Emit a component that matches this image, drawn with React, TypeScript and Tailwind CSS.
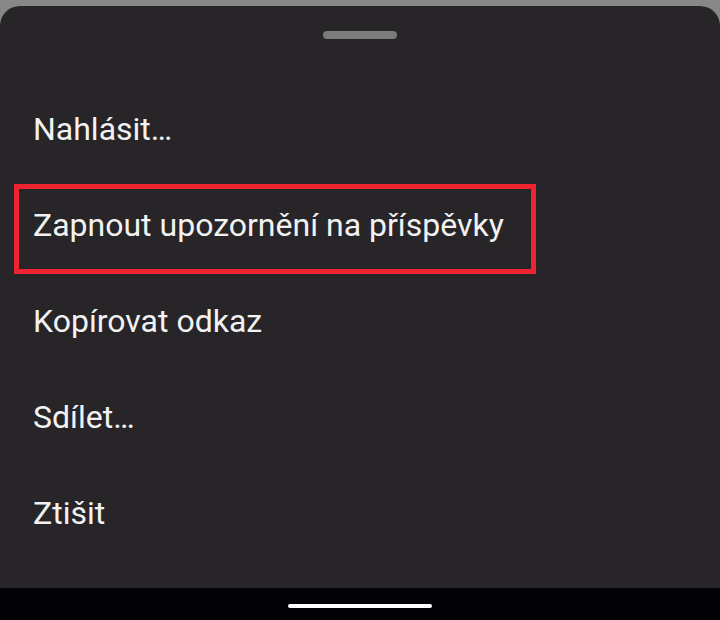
const items = [
  "Nahlásit…",
  "Zapnout upozornění na příspěvky",
  "Kopírovat odkaz",
  "Sdílet…",
  "Ztišit",
];

export default function App() {
  return (
    <div
      className="flex h-[620px] w-[720px] flex-col overflow-hidden bg-[#878787] pt-[6px]"
      style={{ fontFamily: "Roboto, 'Noto Sans', sans-serif" }}
    >
      {/* Bottom sheet */}
      <div className="flex flex-1 flex-col rounded-t-[20px] bg-[#272528]">
        <div className="flex justify-center pt-[25px]">
          <div className="h-[8px] w-[74px] rounded-full bg-[#7b7b7b]" />
        </div>
        <ul className="mt-[42px] flex flex-col">
          {items.map((label, i) => (
            <li key={label} className="relative flex h-[96px] items-center pl-[33px]">
              <span className="text-[32px] leading-none text-[#f2f2f2]">{label}</span>
              {i === 1 && (
                <div className="absolute left-[14px] top-[7px] h-[90px] w-[522px] border-[5px] border-[#ee2430]" />
              )}
            </li>
          ))}
        </ul>
      </div>

      {/* Nav bar */}
      <div className="flex h-[32px] items-center justify-center bg-[#030206] pt-[4px]">
        <div className="h-[4px] w-[144px] rounded-full bg-white" />
      </div>
    </div>
  );
}
